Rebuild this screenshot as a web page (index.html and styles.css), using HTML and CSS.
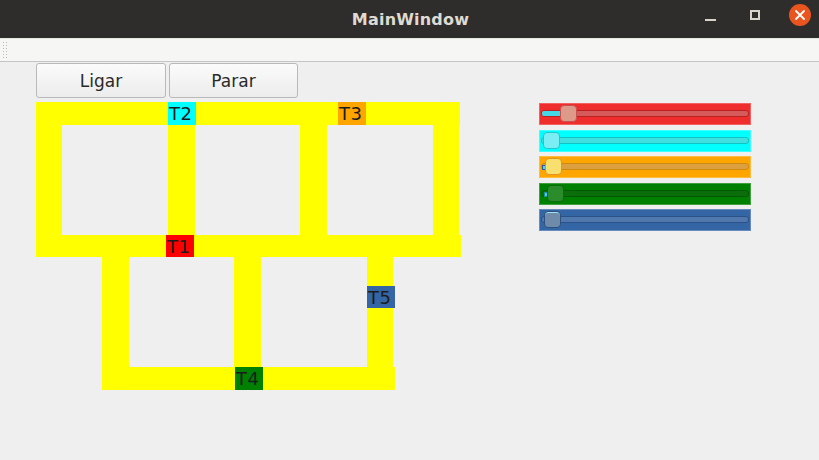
FILE: index.html
```html
<!DOCTYPE html>
<html>
<head>
<meta charset="utf-8">
<link rel="stylesheet" href="styles.css">
</head>
<body>
<div class="window">
  <header class="titlebar">
    <div class="title">MainWindow</div>
    <div class="controls">
      <span class="ctl min"></span>
      <span class="ctl max"></span>
      <span class="ctl close">
        <svg width="22" height="22" viewBox="0 0 22 22"><circle cx="11" cy="11" r="11" fill="#e9541f"/><path d="M7 7 L15 15 M15 7 L7 15" stroke="#fff" stroke-width="1.8" stroke-linecap="round"/></svg>
      </span>
    </div>
  </header>
  <div class="toolbar"><span class="grip"></span></div>
  <main class="content">
    <div class="buttons">
      <button class="btn ligar">Ligar</button>
      <button class="btn parar">Parar</button>
    </div>
    <div class="workarea">
      <div class="track">
        <div class="seg" style="left:0;top:0;width:424px;height:23px"></div>
        <div class="seg" style="left:0;top:0;width:26px;height:155px"></div>
        <div class="seg" style="left:132px;top:0;width:27px;height:133px"></div>
        <div class="seg" style="left:264px;top:0;width:27px;height:133px"></div>
        <div class="seg" style="left:397px;top:0;width:26px;height:155px"></div>
        <div class="seg" style="left:0;top:133px;width:425px;height:22px"></div>
        <div class="seg" style="left:66px;top:155px;width:27px;height:133px"></div>
        <div class="seg" style="left:198px;top:155px;width:27px;height:133px"></div>
        <div class="seg" style="left:331px;top:155px;width:26px;height:133px"></div>
        <div class="seg" style="left:66px;top:265px;width:293px;height:23px"></div>
        <div class="train t2" style="left:132px;top:0">T2</div>
        <div class="train t3" style="left:302px;top:0">T3</div>
        <div class="train t1" style="left:130px;top:133px">T1</div>
        <div class="train t4" style="left:199px;top:265px">T4</div>
        <div class="train t5" style="left:331px;top:184px">T5</div>
      </div>
      <div class="sliders">
        <div class="slider s-red"><div class="groove"><div class="fill" style="width:18px"></div></div><div class="handle" style="left:20px"></div></div>
        <div class="slider s-cyan"><div class="groove"></div><div class="handle" style="left:3px"></div></div>
        <div class="slider s-orange"><div class="groove"></div><div class="mark"></div><div class="handle" style="left:5px"></div></div>
        <div class="slider s-green"><div class="groove"></div><div class="mark"></div><div class="handle" style="left:7px"></div></div>
        <div class="slider s-blue"><div class="groove"></div><div class="handle" style="left:4px"></div></div>
      </div>
    </div>
  </main>
</div>
</body>
</html>
```

FILE: styles.css
```css
* { box-sizing: border-box; }
html, body { margin: 0; padding: 0; }
body {
  width: 819px;
  height: 460px;
  overflow: hidden;
  background: #efefef;
  font-family: "DejaVu Sans", sans-serif;
}
.window { display: flex; flex-direction: column; height: 460px; }

.titlebar {
  height: 38px;
  background: #2f2d2c;
  position: relative;
  display: flex;
  align-items: center;
  justify-content: center;
}
.title {
  color: #dfdbd2;
  font-weight: bold;
  font-size: 16px;
  letter-spacing: 0.2px;
  margin-left: 2px;
}
.controls {
  position: absolute;
  right: 8px;
  top: 4px;
  height: 22px;
  display: flex;
  align-items: center;
}
.ctl { display: block; position: relative; }
.ctl.min { width: 11px; height: 22px; margin-right: 34px; }
.ctl.min::after {
  content: ""; position: absolute; left: 0; top: 15px; width: 11px; height: 2px; background: #d8d4cc;
}
.ctl.max { width: 10px; height: 10px; border: 2px solid #d8d4cc; margin-right: 29px; margin-top: -1px; }
.ctl.close { width: 22px; height: 22px; }
.ctl.close svg { display: block; }

.toolbar {
  height: 24px;
  background: #f6f6f5;
  border-top: 1px solid #e4e6e0;
  border-bottom: 1px solid #c4c4c4;
  position: relative;
}
.grip {
  position: absolute; left: 2px; top: 2px; width: 5px; height: 19px;
  background-image: radial-gradient(circle, #b8b8b8 0.8px, transparent 1px);
  background-size: 3px 3px;
}

.content { flex: 1; display: flex; flex-direction: column; }
.buttons { display: flex; gap: 3px; padding: 1px 0 0 36px; }
.btn {
  height: 35px;
  border: 1px solid #b9b9b9;
  border-radius: 3px;
  background: linear-gradient(#fbfbfb, #ececec);
  font-family: "DejaVu Sans", sans-serif;
  font-size: 17px;
  color: #2a2a2a;
  padding: 0;
}
.ligar { width: 130px; }
.parar { width: 129px; }

.workarea { display: flex; padding: 4px 0 0 36px; }
.track { position: relative; width: 425px; height: 288px; }
.seg { position: absolute; background: #ffff00; }
.train {
  position: absolute;
  width: 28px; height: 23px;
  font-size: 18px;
  line-height: 23px;
  color: #1c1c1c;
  padding-left: 1px;
  letter-spacing: 0.5px;
}
.t1 { background: #ff0000; height: 22px; }
.t2 { background: #00ffff; }
.t3 { background: #ffa500; }
.t4 { background: #008000; }
.t5 { background: #3465a4; height: 22px; }

.sliders {
  margin-left: 78px;
  margin-top: 1px;
  width: 212px;
  display: flex;
  flex-direction: column;
  gap: 4.5px;
}
.slider { position: relative; height: 22px; border: 1px solid rgba(255,255,255,0.25); }
.groove {
  position: absolute; left: 1px; right: 1px; top: 6px; height: 7px;
  border: 1px solid rgba(0,0,0,0.3);
  border-radius: 3px;
  background: rgba(128,128,128,0.35);
  overflow: hidden;
}
.fill { height: 100%; background: #44d8e6; }
.handle {
  position: absolute; top: 1px; width: 17px; height: 17px;
  border-radius: 4px;
  border: 1px solid rgba(0,0,0,0.2);
}
.mark { position: absolute; left: 2px; top: 8px; width: 4px; height: 5px; border: 1px solid #2a5aa8; background: #5cc8f0; }
.s-red { background: #ef2d2d; }
.s-red .groove { background: #d65a5a; border-color: #b82222; }
.s-red .handle { background: #de9a88; border-color: #c85050; }
.s-cyan { background: #00ffff; }
.s-cyan .groove { background: #3ee0e0; border-color: #10c4c4; }
.s-cyan .handle { background: #7aeef2; border-color: #20c8cc; }
.s-orange { background: #ffa500; }
.s-orange .groove { background: #dca040; border-color: #d08a10; }
.s-orange .handle { background: #f8e070; border-color: #e0961a; }
.s-green { background: #008000; }
.s-green .groove { background: #0a6e0a; border-color: #005800; }
.s-green .handle { background: #2a8c2a; border-color: #0f6a0f; }
.s-green .mark { left: 4px; background: #40d0e8; border-color: #1a90a0; }
.s-blue { background: #3465a4; }
.s-blue .groove { background: #5078ac; border-color: #2a5288; }
.s-blue .handle { background: #6e8caa; border-color: #2c5080; box-shadow: inset 0 1px 0 #9ee0f0; }
```
